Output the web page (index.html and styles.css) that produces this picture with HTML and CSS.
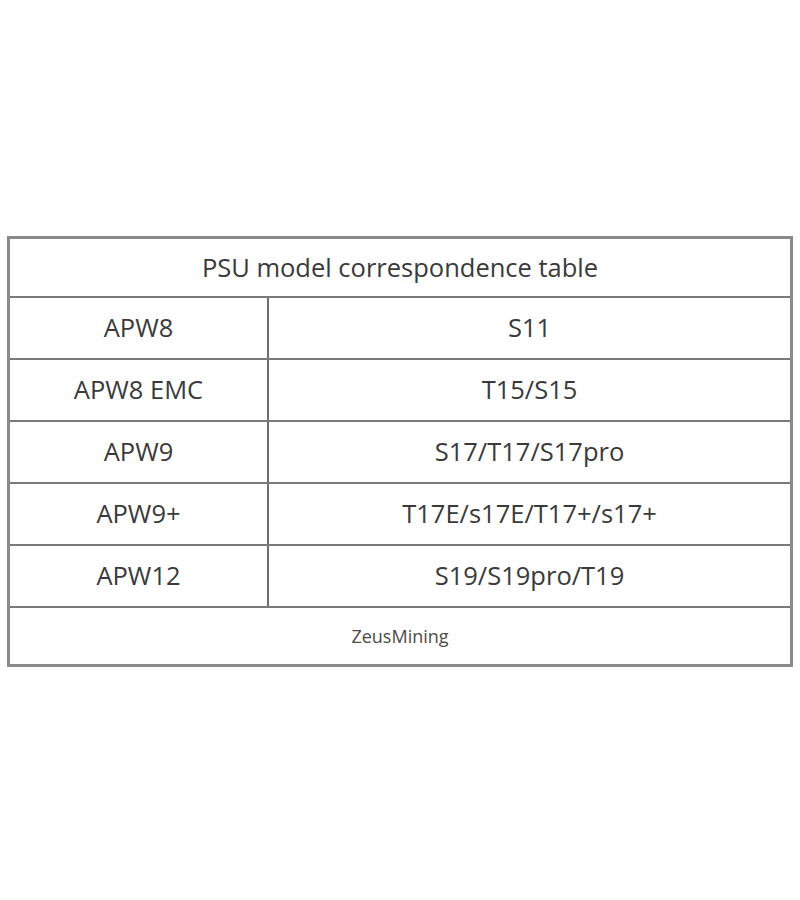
FILE: index.html
```html
<!DOCTYPE html>
<html>
<head>
<meta charset="utf-8">
<link rel="stylesheet" href="styles.css">
</head>
<body>
<div class="table">
  <div class="title">PSU model correspondence table</div>
  <div class="row"><div class="cell left">APW8</div><div class="cell">S11</div></div>
  <div class="row"><div class="cell left">APW8 EMC</div><div class="cell">T15/S15</div></div>
  <div class="row"><div class="cell left">APW9</div><div class="cell">S17/T17/S17pro</div></div>
  <div class="row"><div class="cell left">APW9+</div><div class="cell">T17E/s17E/T17+/s17+</div></div>
  <div class="row"><div class="cell left">APW12</div><div class="cell">S19/S19pro/T19</div></div>
  <div class="footer">ZeusMining</div>
</div>
</body>
</html>
```
FILE: styles.css
```css
html, body {
  margin: 0;
  padding: 0;
  background: #fff;
}
body {
  font-family: "Open Sans", "Noto Sans", sans-serif;
  color: #3a3a3a;
}
.table {
  margin: 236px 0 0 7px;
  width: 780px;
  border: 3px solid #8a8a8a;
}
.title {
  height: 57px;
  display: flex;
  align-items: center;
  justify-content: center;
  font-size: 25.5px;
  padding-bottom: 2px;
  box-sizing: border-box;
}
.row {
  display: grid;
  grid-template-columns: 259px 1fr;
  height: 60px;
  border-top: 2px solid #7a7a7a;
}
.cell {
  display: flex;
  align-items: center;
  justify-content: center;
  font-size: 25.5px;
  padding-bottom: 2px;
  box-sizing: border-box;
}
.left {
  border-right: 2px solid #6e6e6e;
}
.footer {
  height: 56px;
  border-top: 2px solid #7a7a7a;
  display: flex;
  align-items: center;
  justify-content: center;
  font-size: 18px;
  color: #4a4a4a;
}
```
